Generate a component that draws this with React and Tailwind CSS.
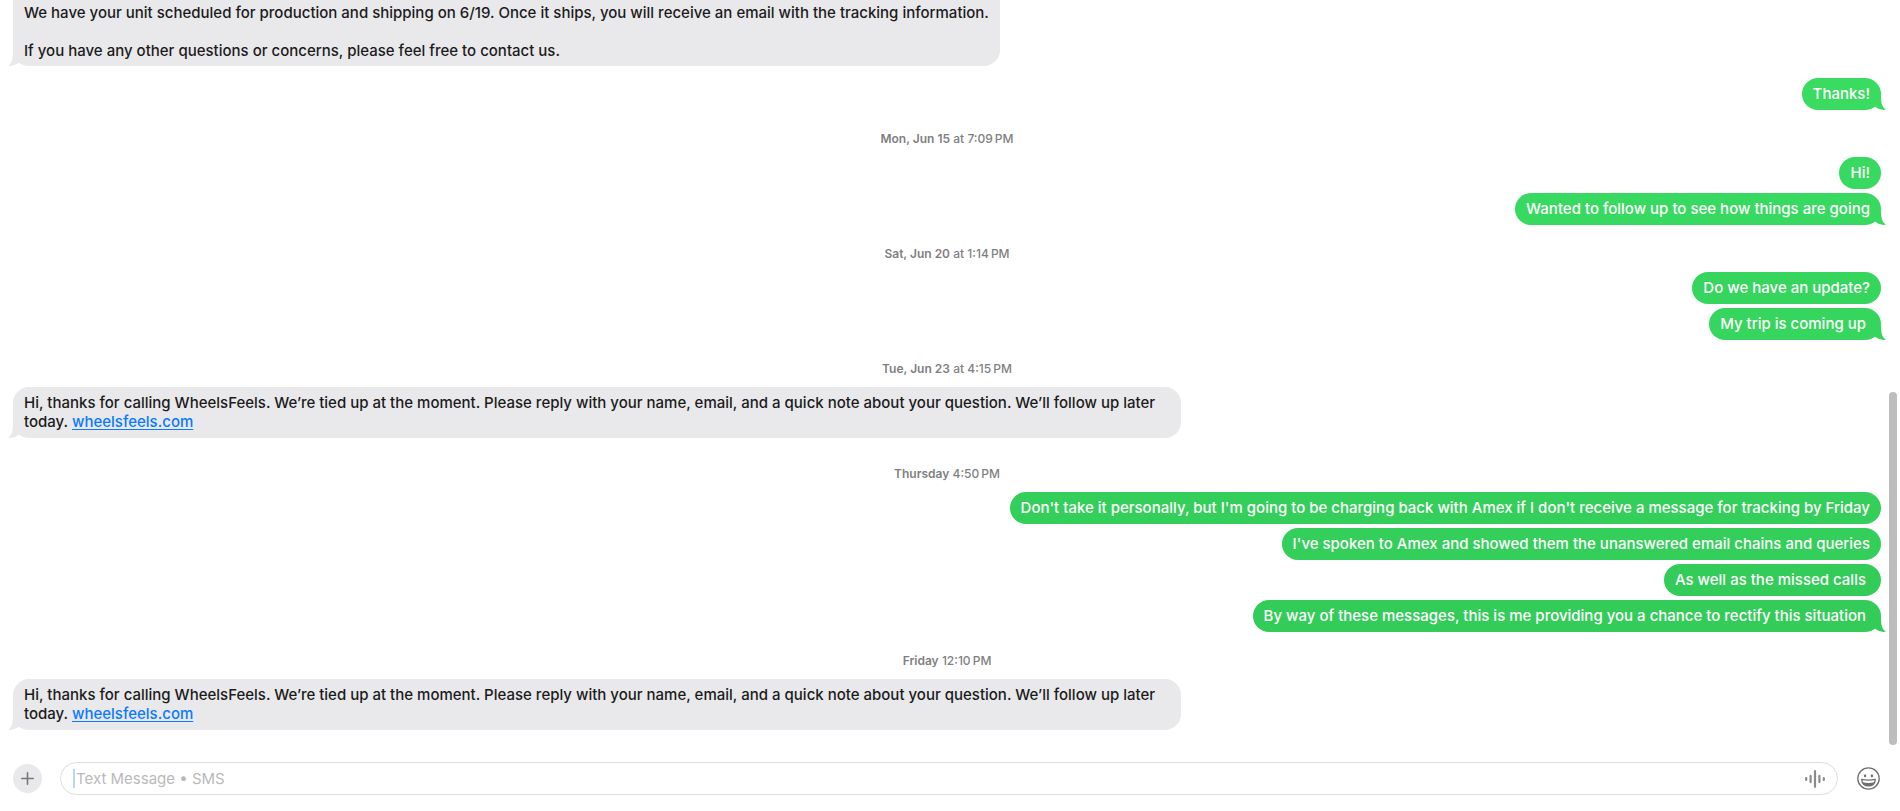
import React from "react";

const AUTO_REPLY =
  "Hi, thanks for calling WheelsFeels. We’re tied up at the moment. Please reply with your name, email, and a quick note about your question. We’ll follow up later today. ";

const NBSP = "\u00a0";

function OutgoingTail() {
  return (
    <svg className="absolute -right-[5px] bottom-0 h-[14px] w-[16px]" viewBox="0 0 16 14" fill="currentColor" aria-hidden="true">
      <path d="M11 0C11 5.5 11.6 11.2 16 13.6C12.6 14.4 8.6 13.6 5 10.6C3 12 1.5 12.6 0 13V0Z" />
    </svg>
  );
}

function IncomingTail() {
  return (
    <svg className="absolute -left-[5px] bottom-0 h-[14px] w-[16px]" viewBox="0 0 16 14" fill="currentColor" aria-hidden="true">
      <path d="M5 0C5 5.5 4.4 11.2 0 13.6C3.4 14.4 7.4 13.6 11 10.6C13 12 14.5 12.6 16 13V0Z" />
    </svg>
  );
}

function Outgoing({ color, tail, children }) {
  return (
    <div className={`relative ${color}`}>
      <div className="rounded-2xl bg-current">
        <p className="px-[11px] py-[6px] leading-5 font-medium text-white">{children}</p>
      </div>
      {tail && <OutgoingTail />}
    </div>
  );
}

function OutgoingGroup({ children }) {
  return <div className="flex flex-col items-end gap-1">{children}</div>;
}

function Incoming({ children }) {
  return (
    <div className="relative max-w-5/8 self-start text-[#e9e9eb]">
      <div className="rounded-2xl bg-current px-[11px] pt-[6px] pb-[7px] leading-[19px] font-medium">
        <p className="text-[#1b1b1c]">{children}</p>
      </div>
      <IncomingTail />
    </div>
  );
}

function Stamp({ day, time, spaced }) {
  return (
    <p className={`pb-[10px] text-center text-xs leading-4 font-medium text-[#7f7f82] ${spaced ? "pt-[28px]" : "pt-[21px]"}`}>
      <span className="font-semibold">{day}</span> {time}
    </p>
  );
}

function SiteLink() {
  return (
    <a href="#wheelsfeels" className="text-[#0a7aff] underline underline-offset-2">
      wheelsfeels.com
    </a>
  );
}

function PlusIcon() {
  return (
    <svg className="size-[13px]" viewBox="0 0 13 13" stroke="currentColor" strokeWidth="1.6" strokeLinecap="round" aria-hidden="true">
      <path d="M6.5 .8V12.2M.8 6.5H12.2" />
    </svg>
  );
}

function WaveIcon() {
  return (
    <svg className="h-[18px] w-5" viewBox="0 0 20 18" stroke="currentColor" strokeWidth="2.2" strokeLinecap="round" aria-hidden="true">
      <path d="M1.2 8V10M5.6 5.9V12.1M10 1.2V16.8M14.4 5.9V12.1M18.8 8V10" />
    </svg>
  );
}

function SmileIcon() {
  return (
    <svg className="size-[23px]" viewBox="0 0 23 23" fill="none" stroke="currentColor" strokeWidth="1.3" aria-hidden="true">
      <circle cx="11.5" cy="11.5" r="10.7" />
      <ellipse cx="8.1" cy="8.7" rx="1.2" ry="1.5" fill="currentColor" stroke="none" />
      <ellipse cx="14.9" cy="8.7" rx="1.2" ry="1.5" fill="currentColor" stroke="none" />
      <path d="M4.7 12.4Q11.5 14 18.3 12.4C18 16.4 15.2 18.9 11.5 18.9C7.8 18.9 5 16.4 4.7 12.4Z" strokeLinejoin="round" />
      <path d="M5.2 14.9Q11.5 16.9 17.8 14.9C16.6 17.6 14.3 18.9 11.5 18.9C8.7 18.9 6.4 17.6 5.2 14.9Z" fill="currentColor" stroke="none" />
    </svg>
  );
}

export default function App() {
  return (
    <div className="flex h-screen flex-col bg-white font-['Inter','Liberation_Sans',sans-serif] text-[15px]">
      <main className="relative flex flex-1 flex-col justify-end overflow-hidden pr-[19px] pb-[15px] pl-[13px]">
        <div className="relative max-w-5/8 self-start text-[#e9e9eb]">
          <div className="rounded-b-2xl bg-current px-[11px] pt-[3px] pb-[6px] leading-[19px] font-medium">
            <p className="pb-[19px] text-[#1b1b1c]">
              We have your unit scheduled for production and shipping on 6/19. Once it ships, you will receive an email with the tracking information.
            </p>
            <p className="text-[#1b1b1c]">If you have any other questions or concerns, please feel free to contact us.</p>
          </div>
          <IncomingTail />
        </div>

        <div className="flex flex-col pt-3">
          <OutgoingGroup>
            <Outgoing color="text-[#39db61]" tail>Thanks!</Outgoing>
          </OutgoingGroup>

          <Stamp day="Mon, Jun 15" time={"at 7:09\u202fPM"} />
          <OutgoingGroup>
            <Outgoing color="text-[#38d960]">Hi!</Outgoing>
            <Outgoing color="text-[#38d960]" tail>Wanted to follow up to see how things are going</Outgoing>
          </OutgoingGroup>

          <Stamp day="Sat, Jun 20" time={"at 1:14\u202fPM"} />
          <OutgoingGroup>
            <Outgoing color="text-[#36d55d]">Do we have an update?</Outgoing>
            <Outgoing color="text-[#36d55d]" tail>My trip is coming up{NBSP}</Outgoing>
          </OutgoingGroup>

          <Stamp day="Tue, Jun 23" time={"at 4:15\u202fPM"} />
          <Incoming>
            {AUTO_REPLY}
            <SiteLink />
          </Incoming>

          <Stamp day="Thursday" time={"4:50\u202fPM"} spaced />
          <OutgoingGroup>
            <Outgoing color="text-[#34ce5a]">
              Don't take it personally, but I'm going to be charging back with Amex if I don't receive a message for tracking by Friday
            </Outgoing>
            <Outgoing color="text-[#34ce5a]">I've spoken to Amex and showed them the unanswered email chains and queries</Outgoing>
            <Outgoing color="text-[#33cc59]">As well as the missed calls{NBSP}</Outgoing>
            <Outgoing color="text-[#33cc59]" tail>
              By way of these messages, this is me providing you a chance to rectify this situation{NBSP}
            </Outgoing>
          </OutgoingGroup>

          <Stamp day="Friday" time={"12:10\u202fPM"} />
          <Incoming>
            {AUTO_REPLY}
            <SiteLink />
          </Incoming>
        </div>

        <div className="absolute right-[3px] bottom-0 h-[353px] w-2 rounded-full bg-[#bdbdbd]" aria-hidden="true" />
      </main>

      <form className="flex items-center pt-[17px] pr-5 pb-4 pl-[13px]">
        <button type="button" aria-label="Add attachment" className="flex size-[29px] items-center justify-center rounded-full bg-[#e9e9eb] text-[#77777a]">
          <PlusIcon />
        </button>
        <div className="mr-[19px] ml-[18px] flex h-[33px] flex-1 items-center rounded-full border border-[#dcdcdd] px-3">
          <span className="h-[19px] w-[2px] bg-[#b5d7fd]" aria-hidden="true" />
          <input
            type="text"
            aria-label="Text message"
            placeholder="Text Message • SMS"
            className="min-w-0 flex-1 bg-transparent pl-px leading-5 text-[#1b1b1c] outline-none placeholder:text-[#b9b9bb]"
          />
          <button type="button" aria-label="Record audio" className="text-[#8b8b8b]">
            <WaveIcon />
          </button>
        </div>
        <button type="button" aria-label="Emoji" className="text-[#6f6f6f]">
          <SmileIcon />
        </button>
      </form>
    </div>
  );
}
